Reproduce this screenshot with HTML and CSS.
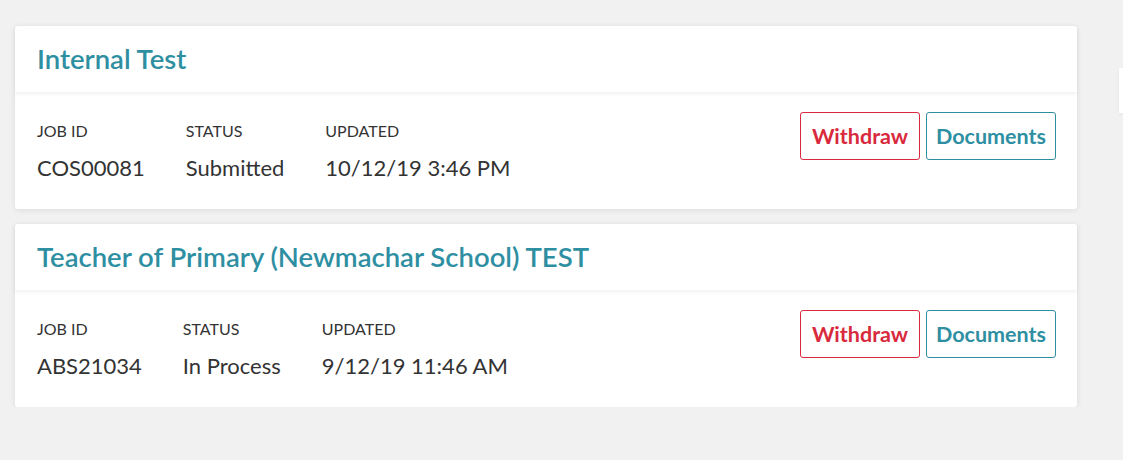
FILE: index.html
```html
<!DOCTYPE html>
<html>
<head>
<meta charset="utf-8">
<link rel="stylesheet" href="styles.css">
</head>
<body>
<div class="list">
  <section class="card">
    <header class="card-head"><h2 class="title">Internal Test</h2></header>
    <div class="card-body">
      <div class="fields">
        <div class="field"><div class="label">JOB ID</div><div class="value">COS00081</div></div>
        <div class="field"><div class="label">STATUS</div><div class="value">Submitted</div></div>
        <div class="field"><div class="label">UPDATED</div><div class="value">10/12/19 3:46 PM</div></div>
      </div>
      <div class="actions">
        <button class="btn btn-danger">Withdraw</button>
        <button class="btn btn-primary">Documents</button>
      </div>
    </div>
  </section>
  <section class="card">
    <header class="card-head"><h2 class="title">Teacher of Primary (Newmachar School) TEST</h2></header>
    <div class="card-body">
      <div class="fields">
        <div class="field"><div class="label">JOB ID</div><div class="value">ABS21034</div></div>
        <div class="field"><div class="label">STATUS</div><div class="value">In Process</div></div>
        <div class="field"><div class="label">UPDATED</div><div class="value">9/12/19 11:46 AM</div></div>
      </div>
      <div class="actions">
        <button class="btn btn-danger">Withdraw</button>
        <button class="btn btn-primary">Documents</button>
      </div>
    </div>
  </section>
</div>
<div class="edge-tab"></div>
</body>
</html>
```
FILE: styles.css
```css
html, body {
  margin: 0;
  padding: 0;
  background: #f1f1f1;
  font-family: Lato, "Open Sans", sans-serif;
  color: #333;
}
.list {
  padding: 26px 46px 0 15px;
  display: flex;
  flex-direction: column;
  gap: 15px;
}
.card {
  background: #fff;
  border-radius: 3px;
  box-shadow: 0 1px 6px rgba(0,0,0,0.09);
}
.card-head {
  height: 66px;
  display: flex;
  align-items: center;
  padding: 0 22px;
  box-shadow: 0 2px 4px rgba(0,0,0,0.06);
  position: relative;
}
.title {
  margin: 0;
  font-size: 27.5px;
  line-height: 32px;
  font-weight: 600;
  color: #2f8fa2;
}
.card-body {
  height: 117px;
  box-sizing: border-box;
  padding: 20px 21px 0 22px;
  display: flex;
  justify-content: space-between;
  align-items: flex-start;
}
.fields {
  display: flex;
  gap: 41px;
  padding-top: 9px;
}
.label {
  font-size: 16px;
  line-height: 20px;
  color: #333;
  text-transform: uppercase;
}
.value {
  font-size: 22px;
  line-height: 26px;
  margin-top: 14px;
  color: #333;
}
.actions {
  display: flex;
  gap: 6px;
}
.btn {
  height: 48px;
  background: #fff;
  border-radius: 3px;
  font-family: inherit;
  font-size: 21.5px;
  font-weight: 700;
  padding: 0 6px;
  cursor: pointer;
}
.btn-danger {
  border: 1px solid #d9293d;
  color: #d9293d;
  width: 120px;
}
.btn-primary {
  border: 1px solid #2f8fa2;
  color: #2f8fa2;
  width: 130px;
}
.edge-tab {
  position: absolute;
  left: 1119px;
  top: 68px;
  width: 10px;
  height: 45px;
  background: #fff;
  box-shadow: 0 1px 4px rgba(0,0,0,0.06);
}
```
